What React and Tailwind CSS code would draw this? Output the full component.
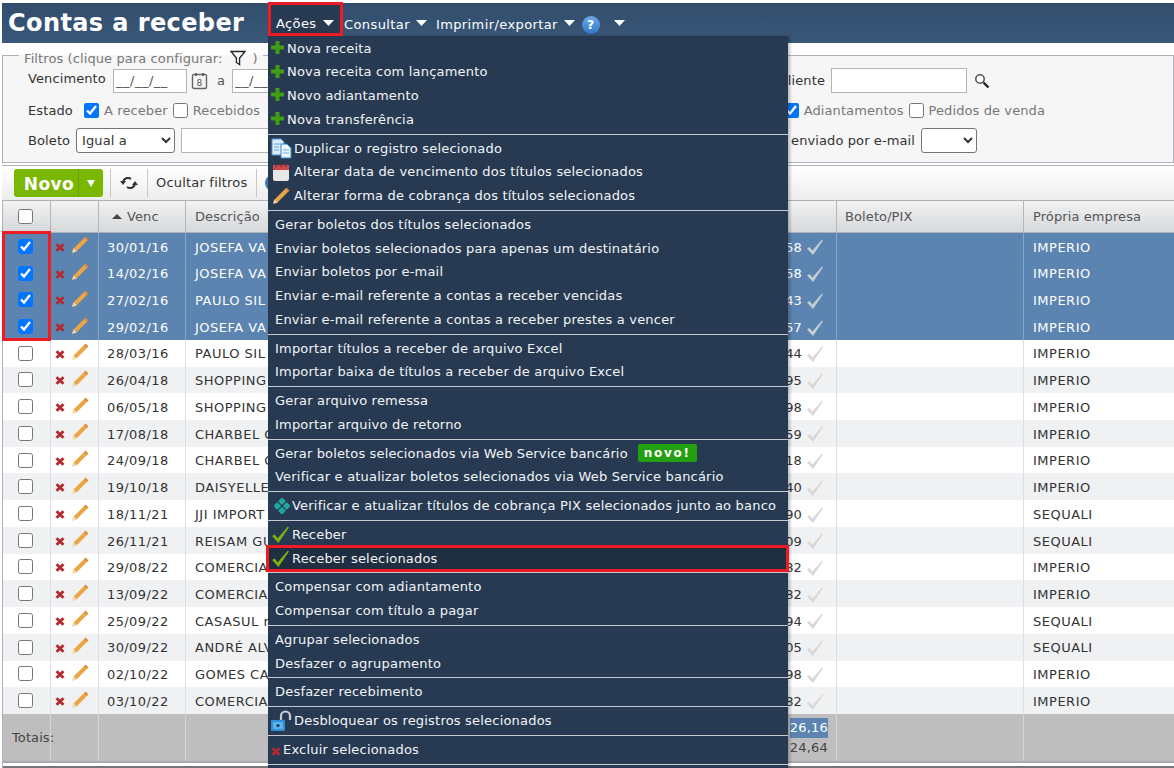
import React from "react";

const rows = [
  ["30/01/16", "JOSEFA VA", "58", "IMPERIO", true],
  ["14/02/16", "JOSEFA VA", "58", "IMPERIO", true],
  ["27/02/16", "PAULO SIL", "43", "IMPERIO", true],
  ["29/02/16", "JOSEFA VA", "57", "IMPERIO", true],
  ["28/03/16", "PAULO SIL", "44", "IMPERIO"],
  ["26/04/18", "SHOPPING", "95", "IMPERIO"],
  ["06/05/18", "SHOPPING", "98", "IMPERIO"],
  ["17/08/18", "CHARBEL C", "59", "IMPERIO"],
  ["24/09/18", "CHARBEL C", "18", "IMPERIO"],
  ["19/10/18", "DAISYELLE", "40", "IMPERIO"],
  ["18/11/21", "JJI IMPORT", "90", "SEQUALI"],
  ["26/11/21", "REISAM GU", "09", "SEQUALI"],
  ["29/08/22", "COMERCIA", "82", "IMPERIO"],
  ["13/09/22", "COMERCIA", "82", "IMPERIO"],
  ["25/09/22", "CASASUL r", "94", "SEQUALI"],
  ["30/09/22", "ANDRÉ ALV", "05", "SEQUALI"],
  ["02/10/22", "GOMES CA", "98", "IMPERIO"],
  ["03/10/22", "COMERCIA", "82", "IMPERIO"],
];

const gridCols = "grid grid-cols-[48px_48px_87px_415px_236px_187px_1fr]";

const Caret = ({ className = "" }) => (
  <svg width="11" height="6" viewBox="0 0 11 6" className={className}>
    <path d="M0 0h11L5.5 6z" fill="#fff" />
  </svg>
);

const Plus = () => (
  <svg width="13" height="13" viewBox="0 0 13 13">
    <path d="M4.5 0h4v4.5H13v4H8.5V13h-4V8.5H0v-4h4.5z" fill="#3f9e12" />
  </svg>
);

const Pencil = ({ size = 18 }) => (
  <svg width={size} height={size} viewBox="0 0 18 18">
    <path d="M4 14L15 3" stroke="#eca545" strokeWidth="4" />
    <path d="M14.6 3.4l1.4-1.4" stroke="#d98a3a" strokeWidth="4" />
    <path d="M2.4 12.2l3.4 3.4L1 17z" fill="#f3d7a8" />
  </svg>
);

const Cross = () => (
  <svg width="10" height="9" viewBox="0 0 10 9">
    <path d="M1.5 1.2l7 6.6M8.5 1.2l-7 6.6" stroke="#b5282e" strokeWidth="2.8" />
  </svg>
);

// tapered tick, thicker at the bottom like the original sprite
const Check = ({ color = "#7fae10", size = 18 }) => (
  <svg width={size} height={size} viewBox="0 0 18 18">
    <path d="M1 10.5l2.4-1.6 3 3.6L16 1.5l1 .8L7 17z" fill={color} />
  </svg>
);

const DocIcon = () => (
  <svg width="21" height="21" viewBox="0 0 21 21">
    <path d="M1 1h9l3 3v13H1z" fill="#dcebf7" stroke="#4d9bd8" />
    <path d="M10 6h6l4 4v10H10z" fill="#eef6fc" stroke="#2f86cc" />
    <path d="M3 6h7M3 9h5M3 12h5M12 12h6M12 15h6" stroke="#6aaee0" />
  </svg>
);

const CalendarIcon = () => (
  <svg width="18" height="19" viewBox="0 0 18 19">
    <rect x="1" y="2" width="16" height="16" rx="2" fill="#e8e8e8" />
    <path d="M1 4a2 2 0 012-2h12a2 2 0 012 2v3H1z" fill="#c9474a" />
    <path d="M4 1v3M9 1v3M14 1v3" stroke="#8a2d2f" strokeWidth="1.4" />
  </svg>
);

const LockIcon = () => (
  <svg width="22" height="22" viewBox="0 0 22 22">
    <path d="M11 10V6a4.5 4.5 0 019 0v4" fill="none" stroke="#c6ccd2" strokeWidth="2.2" />
    <rect x="1" y="10" width="14" height="11" rx="1" fill="#2f8fd6" />
    <rect x="3" y="12" width="10" height="7" fill="#5cb2ea" />
    <circle cx="8" cy="15.5" r="1.6" fill="#123c5f" />
  </svg>
);

const PixIcon = () => (
  <svg width="16" height="16" viewBox="0 0 16 16">
    <g fill="#1fa5a0">
      <rect x="5.2" y="0.5" width="5.6" height="5.6" rx="1" transform="rotate(45 8 3.3)" />
      <rect x="5.2" y="9.9" width="5.6" height="5.6" rx="1" transform="rotate(45 8 12.7)" />
      <rect x="0.5" y="5.2" width="5.6" height="5.6" rx="1" transform="rotate(45 3.3 8)" />
      <rect x="9.9" y="5.2" width="5.6" height="5.6" rx="1" transform="rotate(45 12.7 8)" />
    </g>
  </svg>
);

const Sep = () => <div className="mt-[2px] mb-[2px] h-px bg-[#c3c9d0]" />;

// icon column is narrower for the plus and cross entries
const Item = ({ icon, pad = "pl-[7px]", children, active }) => (
  <div className={`flex h-[23.75px] items-center whitespace-nowrap ${pad} ${active ? "bg-[#1f2e40]" : ""}`}>
    {icon}
    {children}
  </div>
);

const IconBox = ({ w, children }) => (
  <span className={`flex shrink-0 items-center justify-center ${w}`}>{children}</span>
);

const plus = (
  <IconBox w="w-[19px] -mt-[2px]">
    <Plus />
  </IconBox>
);
const wide = (node) => <IconBox w="w-[26px]">{node}</IconBox>;
const checkIcon = <IconBox w="w-[24px]"><Check size={19} /></IconBox>;

const AcoesMenu = () => (
  <div className="absolute top-[36px] left-[268px] h-[732px] w-[520px] overflow-hidden bg-[#273a52] pt-[0.6px] text-[13px] tracking-[0.2px] text-[#f2f5f8] shadow-[2px_0_3px_rgba(0,0,0,0.25)]">
    <Item pad="pl-0" icon={plus}>Nova receita</Item>
    <Item pad="pl-0" icon={plus}>Nova receita com lançamento</Item>
    <Item pad="pl-0" icon={plus}>Novo adiantamento</Item>
    <Item pad="pl-0" icon={plus}>Nova transferência</Item>
    <Sep />
    <Item pad="pl-0" icon={wide(<DocIcon />)}>Duplicar o registro selecionado</Item>
    <Item pad="pl-0" icon={wide(<CalendarIcon />)}>Alterar data de vencimento dos títulos selecionados</Item>
    <Item pad="pl-0" icon={wide(<Pencil />)}>Alterar forma de cobrança dos títulos selecionados</Item>
    <Sep />
    <Item>Gerar boletos dos títulos selecionados</Item>
    <Item>Enviar boletos selecionados para apenas um destinatário</Item>
    <Item>Enviar boletos por e-mail</Item>
    <Item>Enviar e-mail referente a contas a receber vencidas</Item>
    <Item>Enviar e-mail referente a contas a receber prestes a vencer</Item>
    <Sep />
    <Item>Importar títulos a receber de arquivo Excel</Item>
    <Item>Importar baixa de títulos a receber de arquivo Excel</Item>
    <Sep />
    <Item>Gerar arquivo remessa</Item>
    <Item>Importar arquivo de retorno</Item>
    <Sep />
    <Item>
      <span className="tracking-[0.14px]">Gerar boletos selecionados via Web Service bancário</span>
      <span className="ml-[10px] rounded-[2px] bg-[#22a00f] px-[6px] text-[12px] leading-[18px] font-bold tracking-[1.7px] text-white">novo!</span>
    </Item>
    <Item>Verificar e atualizar boletos selecionados via Web Service bancário</Item>
    <Sep />
    <Item pad="pl-[3px]" icon={<IconBox w="w-[21px]"><PixIcon /></IconBox>}>Verificar e atualizar títulos de cobrança PIX selecionados junto ao banco</Item>
    <Sep />
    <Item pad="pl-0" icon={checkIcon}>Receber</Item>
    <Item pad="pl-0" icon={checkIcon} active>Receber selecionados</Item>
    <Sep />
    <Item>Compensar com adiantamento</Item>
    <Item>Compensar com título a pagar</Item>
    <Sep />
    <Item>Agrupar selecionados</Item>
    <Item>Desfazer o agrupamento</Item>
    <Sep />
    <Item>Desfazer recebimento</Item>
    <Sep />
    <Item pad="pl-0" icon={wide(<LockIcon />)}>Desbloquear os registros selecionados</Item>
    <Sep />
    <Item pad="pl-0" icon={<IconBox w="w-[15px] mt-[4px]"><Cross /></IconBox>}>Excluir selecionados</Item>
    <Sep />
  </div>
);

const Header = () => (
  <header className="mt-[3px] ml-[2px] flex h-[40px] items-center bg-gradient-to-b from-[#324d6c] to-[#3a587a] text-[13px] text-white">
    <h1 className="ml-[6px] w-[260px] text-[24px] leading-none font-bold tracking-[0.4px]">Contas a receber</h1>
    <div className="flex items-center self-stretch pt-[3px] tracking-[0.4px]">
      <span className="-mt-[3px] flex h-[33px] w-[75px] items-center self-start bg-[#273a52] pt-[9px] pl-[8px]">Ações<Caret className="ml-[6px] -mt-[3px]" /></span>
      <span className="ml-[1px] flex items-center">Consultar<Caret className="ml-[6px] -mt-[3px]" /></span>
      <span className="ml-[9px] flex items-center">Imprimir/exportar<Caret className="ml-[6px] -mt-[3px]" /></span>
      <span className="ml-[7px] flex h-[18px] w-[18px] items-center justify-center rounded-full bg-gradient-to-b from-[#6aa9e8] to-[#2f78c8] text-[13px] font-bold">?</span>
      <Caret className="ml-[14px] -mt-[3px]" />
    </div>
  </header>
);

const Box = ({ checked }) => (
  <input type="checkbox" readOnly checked={!!checked} className="h-[15px] w-[15px] shrink-0" />
);

const Filters = () => (
  <fieldset className="mt-[2px] ml-[2px] h-[118px] border border-[#aeb1b8] bg-[#f6f6f6] pl-[25px] text-[13px] tracking-[0.1px] text-[#333]">
    <legend className="-ml-[9px] flex items-center px-[5px] pt-[6px] leading-[15px] text-[#777]">
      Filtros (clique para configurar:
      <svg width="16" height="16" viewBox="0 0 16 16" className="mx-[7px] -mt-[2px]">
        <path d="M1 1.5h14L9.6 8v6.5L6.4 12.5V8z" fill="none" stroke="#222" strokeWidth="1.3" />
      </svg>
      )
    </legend>
    <div className="mt-[2px] flex h-[25px] items-center">
      <span className="w-[85px] -mt-[4px]">Vencimento</span>
      <input readOnly value="__/__/__" className="h-[24px] w-[74px] border border-[#b5b5b5] bg-white px-[2px] tracking-[0.5px] text-[#555]" />
      <svg width="17" height="18" viewBox="0 0 17 18" className="ml-[4px]">
        <rect x="1.5" y="2.5" width="14" height="14" rx="1.5" fill="#f4f4f4" stroke="#666" strokeWidth="1.4" />
        <path d="M5 1v3M12 1v3" stroke="#444" strokeWidth="1.4" />
        <text x="8.5" y="14" fontSize="9" textAnchor="middle" fill="#555">8</text>
      </svg>
      <span className="ml-[9px] text-[#555]">a</span>
      <input readOnly value="__/__/__" className="ml-[7px] h-[24px] w-[74px] border border-[#b5b5b5] bg-white px-[2px] tracking-[0.5px] text-[#555]" />
      <span className="ml-auto">Cliente</span>
      <input readOnly className="ml-[6px] h-[25px] w-[136px] border border-[#b5b5b5] bg-white" />
      <svg width="16" height="16" viewBox="0 0 16 16" className="mr-[183px] ml-[7px]">
        <circle cx="6" cy="6" r="4.2" fill="#fff" stroke="#555" strokeWidth="1.6" />
        <path d="M9.5 9.5l5 5" stroke="#222" strokeWidth="2.4" />
      </svg>
    </div>
    <div className="mt-[5px] flex h-[25px] items-center text-[#777]">
      <span className="w-[56px] text-[#333]">Estado</span>
      <Box checked />
      <span className="ml-[5px]">A receber</span>
      <span className="ml-[5px] flex"><Box /></span>
      <span className="ml-[5px]">Recebidos</span>
      <span className="ml-auto flex"><Box checked /></span>
      <span className="ml-[5px]">Adiantamentos</span>
      <span className="ml-[5px] flex"><Box /></span>
      <span className="mr-[128px] ml-[5px]">Pedidos de venda</span>
    </div>
    <div className="mt-[4px] flex h-[26px] items-center">
      <span className="mt-[2px] w-[48px]">Boleto</span>
      <select className="h-[25px] w-[99px] rounded-[3px] border border-[#767676] bg-white pl-[1px]">
        <option>Igual a</option>
      </select>
      <input readOnly className="ml-[6px] h-[25px] w-[100px] border border-[#b5b5b5] bg-white" />
      <span className="mt-[1px] ml-auto">Boleto enviado por e-mail</span>
      <select className="mt-[1px] mr-[196px] ml-[6px] h-[25px] w-[56px] rounded-[3px] border border-[#767676] bg-white" />
    </div>
  </fieldset>
);

const Toolbar = () => (
  <div className="mt-[2px] ml-[2px] flex h-[35px] items-center border-t border-[#aeb1b8] bg-gradient-to-b from-white to-[#ededed] text-[13px] tracking-[0.2px] text-[#333]">
    <div className="ml-[12px] flex h-[28px] w-[89px] rounded-[3px] bg-[#7ab800] text-white">
      <span className="flex w-[64px] items-center justify-center pt-[3px] pl-[6px] text-[17px] font-bold tracking-[0.4px]">Novo</span>
      <span className="flex flex-1 items-center justify-center border-l border-[#6a9e06]">
        <svg width="8" height="7" viewBox="0 0 8 7"><path d="M0 0h8L4 7z" fill="#fff" /></svg>
      </span>
    </div>
    <div className="ml-[7px] flex h-[28px] w-[38px] items-center justify-center border-x border-[#c8c8c8]">
      <svg width="18" height="14" viewBox="0 0 18 14">
        <path d="M3 6a5 5 0 018-3M15 8a5 5 0 01-8 3" fill="none" stroke="#333" strokeWidth="2" />
        <path d="M0 5h6L3 9zM12 9h6l-3-4z" fill="#333" />
      </svg>
    </div>
    <span className="ml-[8px]">Ocultar filtros</span>
    <div className="ml-[9px] h-[28px] border-l border-[#c8c8c8]" />
    <span className="ml-[8px] h-[16px] w-[16px] rounded-full bg-[#3f78b8]" />
  </div>
);

const GridTable = () => (
  <div className="ml-[2px] border-l border-[#aeb1b8] text-[13px] tracking-[0.1px]">
    <div className={`${gridCols} h-[33px] border-y border-[#aeb1b8] bg-gradient-to-b from-[#f2f2f2] to-[#d6d8db] text-[#555]`}>
      <div className="flex items-center justify-center border-r border-[#b4b6bb] pr-[3px]"><Box /></div>
      <div className="border-r border-[#b4b6bb]" />
      <div className="flex items-center border-r border-[#b4b6bb] pl-[13px]">
        <svg width="10" height="5" viewBox="0 0 10 5" className="mr-[5px]"><path d="M5 0l5 5H0z" fill="#444" /></svg>
        Venc
      </div>
      <div className="flex items-center border-r border-[#b4b6bb] pl-[9px]">Descrição</div>
      <div className="border-r border-[#b4b6bb]" />
      <div className="flex items-center border-r border-[#b4b6bb] pl-[8px]">Boleto/PIX</div>
      <div className="flex items-center pl-[9px]">Própria empresa</div>
    </div>
    {rows.map(([date, desc, val, company, selected], i) => {
      const line = selected ? "border-r border-[#8aa6c6]" : "border-r border-[#dedfe2]";
      const rowColor = selected ? "bg-[#5b84b1] text-white" : i % 2 === 0 ? "bg-white text-[#333]" : "bg-[#f0f1f3] text-[#333]";
      return (
        <div key={i} className={`${gridCols} h-[26.72px] ${rowColor}`}>
          <div className={`flex items-center justify-center pr-[3px] ${line}`}><Box checked={selected} /></div>
          <div className={`flex items-center pl-[4px] ${line}`}>
            <span className="mt-[2px] flex"><Cross /></span>
            <span className="ml-[6px] -mt-[2px] flex"><Pencil /></span>
          </div>
          <div className={`flex items-center pt-[2px] pl-[8px] tracking-[0.4px] ${line}`}>{date}</div>
          <div className={`flex items-center pt-[2px] pl-[9px] tracking-[0.5px] whitespace-nowrap ${line}`}>{desc}</div>
          <div className={`flex items-center justify-end pt-[2px] pr-[12px] ${line}`}>
            {val}
            <span className="ml-[4px] flex"><Check color={selected ? "#c5ccd3" : "#d8d8d8"} /></span>
          </div>
          <div className={line} />
          <div className="flex items-center pt-[2px] pl-[9px] tracking-[0.5px]">{company}</div>
        </div>
      );
    })}
    <div className={`${gridCols} h-[49px] border-b-2 border-[#a6a9b0] bg-[#bebebe] text-[#444]`}>
      <div className="flex items-center border-r border-[#d4d4d4] pl-[9px]">Totais:</div>
      <div className="border-r border-[#d4d4d4]" />
      <div className="border-r border-[#d4d4d4]" />
      <div className="border-r border-[#d4d4d4]" />
      <div className="flex flex-col items-end border-r border-[#d4d4d4] pt-[4px] pr-[8px] tracking-[0.2px]">
        <span className="bg-[#5b84b1] leading-[20px] text-white">26,16</span>
        <span className="leading-[20px]">24,64</span>
      </div>
      <div className="border-r border-[#d4d4d4]" />
      <div />
    </div>
    <div className="mt-[3px] h-[2px] bg-[#777]" />
  </div>
);

const App = () => {
  return (
    <div className="relative h-[768px] w-[1174px] overflow-hidden bg-white font-['DejaVu_Sans',Verdana,sans-serif]">
      <Header />
      <Filters />
      <Toolbar />
      <GridTable />
      <AcoesMenu />
      {/* red callouts drawn over the screen */}
      <div className="absolute top-[2px] left-[268px] h-[34px] w-[75px] border-[3px] border-[#ed1c24]" />
      <div className="absolute top-[231px] left-[2px] h-[110px] w-[49px] border-[3px] border-[#ed1c24]" />
      <div className="absolute top-[545px] left-[266px] h-[27px] w-[523px] border-[3px] border-[#ed1c24]" />
    </div>
  );
};

export default App;
